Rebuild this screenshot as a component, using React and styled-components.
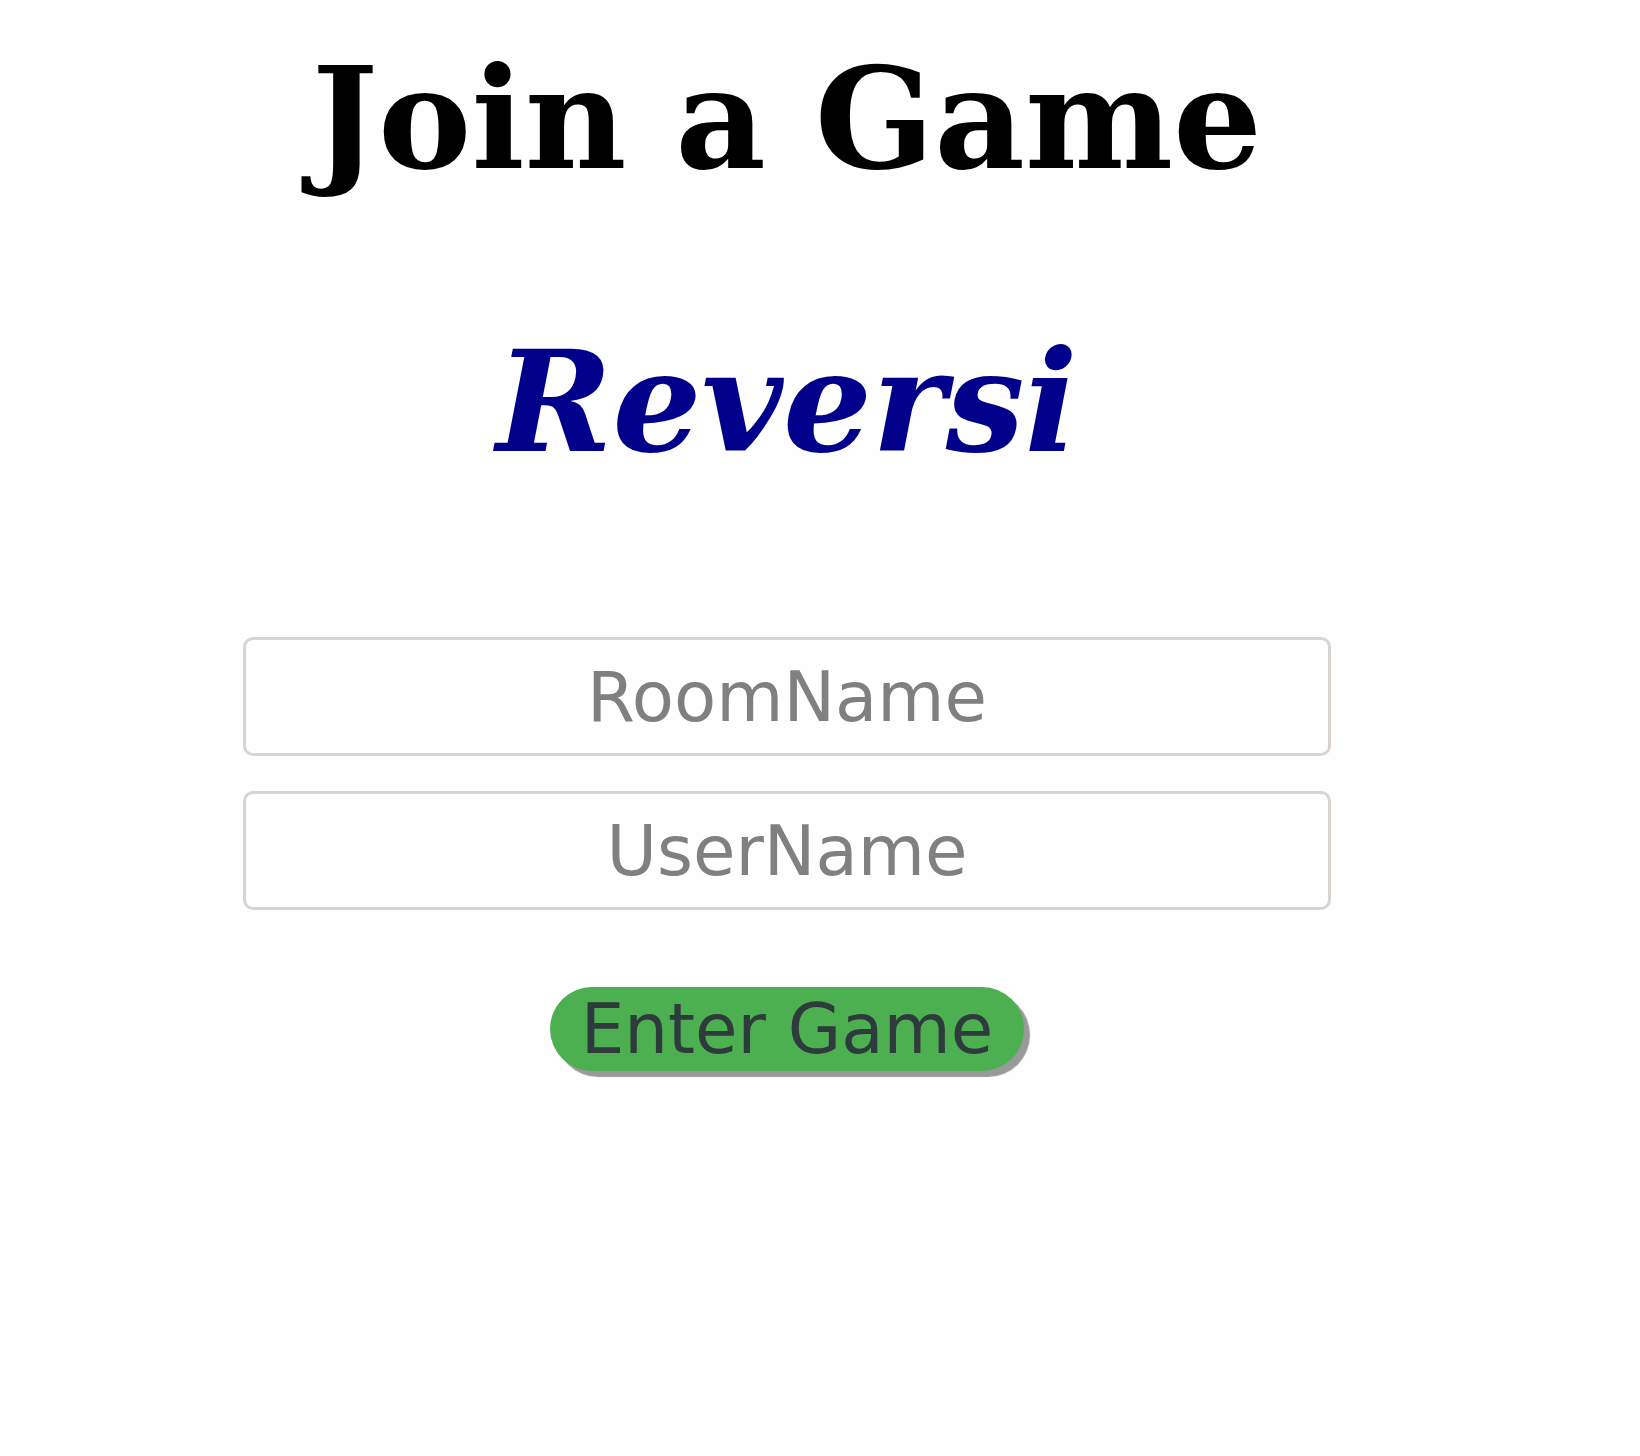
import React from "react";
import styled, { createGlobalStyle } from "styled-components";

const GlobalStyle = createGlobalStyle`
  *, *::before, *::after { box-sizing: border-box; }
  body { margin: 0; background: #fefefe; }
`;

const Page = styled.main`
  display: flex;
  flex-direction: column;
  align-items: center;
  padding: 37px 66px 37px 0;
  text-align: center;
`;

const Heading = styled.h1`
  margin: 0 0 119px;
  font: bold 140px/164px "DejaVu Serif", serif;
  color: #000;
`;

const GameName = styled.h2`
  margin: 0 0 153px;
  font: italic bold 140px/164px "DejaVu Serif", serif;
  color: #00008b;
`;

const JoinForm = styled.form`
  display: flex;
  flex-direction: column;
  align-items: center;
  gap: 35px;
  width: 100%;
  max-width: 1088px;
`;

const Field = styled.input`
  width: 100%;
  height: 119px;
  padding: 16px;
  border: 3px solid #d9d4cf;
  border-radius: 10px;
  background: #fefefe;
  font: 69px/84px "DejaVu Sans", sans-serif;
  text-align: center;
  color: #333;
  outline: none;

  &::placeholder {
    color: #808080;
    opacity: 1;
  }
`;

const EnterButton = styled.button`
  margin-top: 42px;
  padding: 0 31px;
  border: 0;
  border-radius: 42px;
  background: #4caf50;
  box-shadow: 6px 6px 1px #999;
  font: 69px/84px "DejaVu Sans", sans-serif;
  color: #2f3a3c;
  cursor: pointer;
`;

export default function App() {
  return (
    <>
      <GlobalStyle />
      <Page>
        <Heading>Join a Game</Heading>
        <GameName>Reversi</GameName>
        <JoinForm onSubmit={(event) => event.preventDefault()}>
          <Field type="text" name="room" placeholder="RoomName" aria-label="RoomName" />
          <Field type="text" name="user" placeholder="UserName" aria-label="UserName" />
          <EnterButton type="submit">Enter Game</EnterButton>
        </JoinForm>
      </Page>
    </>
  );
}
